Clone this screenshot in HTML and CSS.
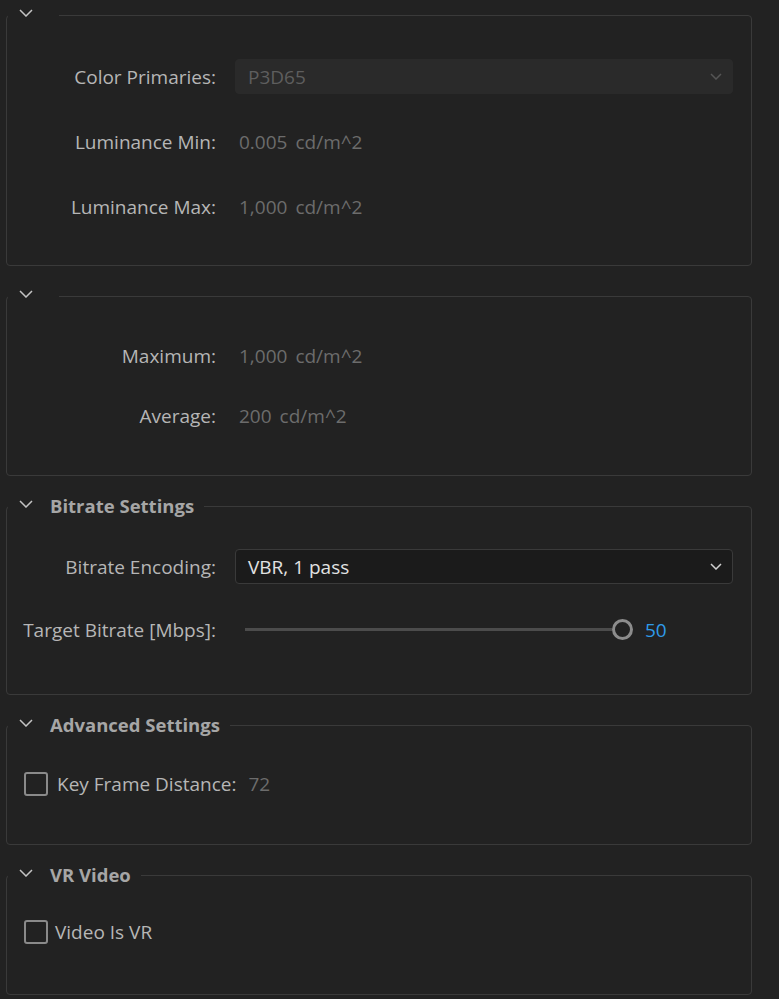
FILE: index.html
```html
<!DOCTYPE html>
<html>
<head>
<meta charset="utf-8">
<link rel="stylesheet" href="styles.css">
</head>
<body>
<div class="panel">
  <fieldset class="group g1">
    <legend class="legend legend-empty"><svg class="chev" viewBox="0 0 14 8"><path d="M1 1l6 6 6-6"/></svg></legend>
    <div class="rows rows-1">
      <div class="row">
        <span class="label">Color Primaries:</span>
        <div class="select select-disabled"><span>P3D65</span><svg class="sel-chev" viewBox="0 0 12 7"><path d="M1 1l5 5 5-5"/></svg></div>
      </div>
      <div class="row">
        <span class="label">Luminance Min:</span>
        <span class="value"><span>0.005</span><span>cd/m^2</span></span>
      </div>
      <div class="row">
        <span class="label">Luminance Max:</span>
        <span class="value"><span>1,000</span><span>cd/m^2</span></span>
      </div>
    </div>
  </fieldset>

  <fieldset class="group g2">
    <legend class="legend legend-empty"><svg class="chev" viewBox="0 0 14 8"><path d="M1 1l6 6 6-6"/></svg></legend>
    <div class="rows rows-2">
      <div class="row">
        <span class="label">Maximum:</span>
        <span class="value"><span>1,000</span><span>cd/m^2</span></span>
      </div>
      <div class="row">
        <span class="label">Average:</span>
        <span class="value"><span>200</span><span>cd/m^2</span></span>
      </div>
    </div>
  </fieldset>

  <fieldset class="group g3">
    <legend class="legend"><svg class="chev" viewBox="0 0 14 8"><path d="M1 1l6 6 6-6"/></svg><span class="title">Bitrate Settings</span></legend>
    <div class="rows rows-3">
      <div class="row">
        <span class="label">Bitrate Encoding:</span>
        <div class="select"><span>VBR, 1 pass</span><svg class="sel-chev" viewBox="0 0 12 7"><path d="M1 1l5 5 5-5"/></svg></div>
      </div>
      <div class="row">
        <span class="label">Target Bitrate [Mbps]:</span>
        <div class="slider">
          <div class="track"></div>
          <div class="knob"></div>
          <span class="slider-val">50</span>
        </div>
      </div>
    </div>
  </fieldset>

  <fieldset class="group g4">
    <legend class="legend"><svg class="chev" viewBox="0 0 14 8"><path d="M1 1l6 6 6-6"/></svg><span class="title">Advanced Settings</span></legend>
    <div class="rows rows-4">
      <div class="check-row">
        <span class="checkbox"></span>
        <span class="check-label">Key Frame Distance:</span>
        <span class="check-val">72</span>
      </div>
    </div>
  </fieldset>

  <fieldset class="group g5">
    <legend class="legend"><svg class="chev" viewBox="0 0 14 8"><path d="M1 1l6 6 6-6"/></svg><span class="title">VR Video</span></legend>
    <div class="rows rows-5">
      <div class="check-row check-row-vr">
        <span class="checkbox"></span>
        <span class="check-label">Video Is VR</span>
      </div>
    </div>
  </fieldset>
</div>
</body>
</html>
```

FILE: styles.css
```css
html, body {
  margin: 0;
  padding: 0;
  background: #222222;
}
body {
  font-family: "Open Sans", Lato, sans-serif;
  font-size: 19px;
  color: #b6b6b6;
}
.panel {
  width: 746px;
  padding: 3px 0 0 6px;
  display: flex;
  flex-direction: column;
  gap: 18px;
}
.group {
  margin: 0;
  padding: 0;
  border: 1px solid #3a3a3a;
  border-radius: 4px;
  min-width: 0;
}
.legend {
  margin-left: 1px;
  padding: 0 10px 0 11px;
  height: 24px;
  display: flex;
  align-items: center;
}
.legend-empty {
  padding-right: 9px;
}
.chev {
  width: 14px;
  height: 8px;
  margin-top: -5px;
  margin-right: 17px;
  flex: none;
}
.chev path {
  fill: none;
  stroke: #c4c4c4;
  stroke-width: 1.5;
}
.title {
  font-weight: 700;
  color: #a6a6a6;
  font-size: 18.5px;
  line-height: 24px;
}
.rows {
  display: flex;
  flex-direction: column;
}
.rows-1 { padding: 32px 0 41px; gap: 30px; }
.rows-2 { padding: 30px 0 42px; gap: 25px; }
.rows-3 { padding: 31px 0 47px; gap: 28px; }
.rows-4 { padding: 29px 0 43px; }
.rows-5 { padding: 27px 0 45px; }
.row {
  display: flex;
  align-items: center;
  height: 35px;
}
.label {
  width: 209px;
  text-align: right;
  flex: none;
  white-space: nowrap;
}
.value {
  margin-left: 23px;
  color: #6c6c6c;
  display: flex;
  gap: 8px;
}
.select {
  margin-left: 19px;
  width: 498px;
  height: 35px;
  box-sizing: border-box;
  border: 1px solid #3a3a3a;
  border-radius: 4px;
  background: #1b1b1b;
  display: flex;
  align-items: center;
  justify-content: space-between;
  padding: 0 10px 0 12px;
  color: #e2e2e2;
}
.select-disabled {
  background: #2a2a2a;
  border-color: #2a2a2a;
  color: #5e5e5e;
}
.sel-chev {
  width: 12px;
  height: 7px;
}
.sel-chev path {
  fill: none;
  stroke: #d0d0d0;
  stroke-width: 1.5;
}
.select-disabled .sel-chev path {
  stroke: #555555;
}
.slider {
  margin-left: 29px;
  display: flex;
  align-items: center;
  height: 35px;
}
.track {
  width: 367px;
  height: 3px;
  background: #4c4c4c;
}
.knob {
  width: 21px;
  height: 21px;
  box-sizing: border-box;
  border: 3px solid #8c8c8c;
  border-radius: 50%;
  background: #222222;
  flex: none;
}
.slider-val {
  margin-left: 12px;
  color: #2f9be9;
}
.check-row {
  display: flex;
  align-items: center;
  height: 35px;
  padding-left: 17px;
}
.checkbox {
  width: 24px;
  height: 24px;
  box-sizing: border-box;
  border: 2.5px solid #8a8a8a;
  border-radius: 3px;
  flex: none;
}
.check-label {
  margin-left: 9px;
}
.check-row-vr .check-label {
  margin-left: 7px;
}
.check-val {
  margin-left: 12px;
  color: #6c6c6c;
}
```
